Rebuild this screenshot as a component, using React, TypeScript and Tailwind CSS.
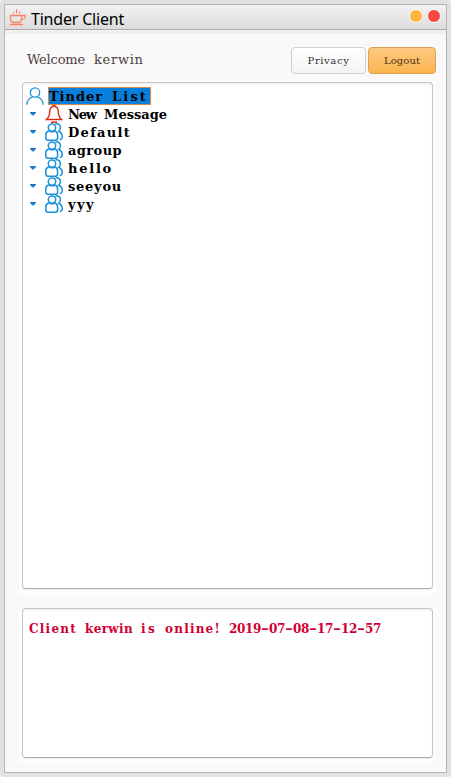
import React from "react";

function Word({ children, className }: { children: React.ReactNode; className: string }) {
  return <span className={`inline-block whitespace-pre ${className}`}>{children}</span>;
}

function Coffee() {
  return (
    <svg className="h-[17px] w-[18px] shrink-0" viewBox="0 0 18 17" fill="none" stroke="#ff8068" strokeWidth="1.3">
      <path d="M1.500 6.500h11v4q-.6 2.500-2.500 3H4.500q-2.500-.5-3-3zM12.500 6.500h3.500v2.500q-1 1.500-3.500 1.500M1 15.500h13" />
      <path d="M4.500 2.500v2M7.500 0v4.500M10.500 2.500v2" strokeWidth="1" />
    </svg>
  );
}

function Person() {
  return (
    <svg className="h-[18px] w-[18px] shrink-0" viewBox="0 0 18 18" fill="none" stroke="#1b92dc" strokeWidth="1.3">
      <circle cx="9" cy="5.500" r="4.700" />
      <path d="M.7 17.800C1 13.500 3 11.300 6.300 10M11.700 10C15 11.300 17 13.500 17.300 17.800" />
    </svg>
  );
}

function Bell() {
  return (
    <svg className="h-[18px] w-[18px] shrink-0" viewBox="0 0 18 18" fill="none" stroke="#e02814" strokeWidth="1.400">
      <path d="M8 1.500V.6h2v.9C12.200 2.200 13.300 4 13.300 6.500C13.300 10.500 14.300 12.500 16.500 14.500H1.500C3.700 12.500 4.700 10.500 4.700 6.500C4.700 4 5.800 2.200 8 1.500ZM6 17.300h6" />
    </svg>
  );
}

function Group() {
  return (
    <svg className="h-[18px] w-[18px] shrink-0" viewBox="0 0 18 18" fill="none" stroke="#1b92dc" strokeWidth="1.500">
      <circle cx="7" cy="4.600" r="3.700" />
      <path d="M4.200 8H3.500Q.8 8.900.8 12V15Q.8 17.200 3 17.200H10.500Q12.600 17.200 12.600 15V12Q12.600 8.900 10 8Q7 9.500 4.200 8Z" />
      <path d="M10.300.9C13.500.3 15.600 2.200 15.400 5Q15.200 7.200 13.800 8.200C16.500 9.500 17.300 11.500 17.300 14Q17.200 16.300 14.800 16.500" />
    </svg>
  );
}

function Row({ icon, children }: { icon: React.ReactNode; children: React.ReactNode }) {
  return (
    <div className="flex h-[18px] items-center">
      <svg className="ml-[4px] mr-[8px] h-1 w-[7px] shrink-0" viewBox="0 0 7 4">
        <path d="M0 0h6v1L3.500 3.500h-1L0 1z" fill="#2479c4" />
      </svg>
      {icon}
      <span className="ml-[5px] mt-0.5 whitespace-nowrap">{children}</span>
    </div>
  );
}

function Dash() {
  return <span className="inline-block w-2 origin-left scale-x-[1.6] tracking-normal">-</span>;
}

const groups = [
  { name: "Default", track: "tracking-[1.3px]" },
  { name: "agroup", track: "tracking-[0.4px]" },
  { name: "hello", track: "tracking-[1.75px]" },
  { name: "seeyou", track: "tracking-[0.75px]" },
  { name: "yyy", track: "tracking-[1.45px]" },
];

export default function App() {
  return (
    <div className="h-[777px] w-[451px] bg-[#f5f5f5] font-['DejaVu_Serif',serif]">
      <div className="h-full rounded-[4px] bg-[#e1e1e1] p-1">
        <div className="flex h-full flex-col border border-[#b5b5b5] bg-[#f9f9f9]">
          <header className="flex h-[25px] shrink-0 items-center border-b border-[#aaa] bg-linear-to-b from-[#f1f1f1] to-[#dcdcdc] pl-1 pr-[5px]">
            <Coffee />
            <h1 className="ml-1 mt-1 whitespace-nowrap font-['Noto_Sans',sans-serif] text-[16px] leading-6 tracking-[-0.2px] text-black">Tinder Client</h1>
            <div className="mb-[3px] ml-auto flex gap-1">
              <span className="size-[14px] rounded-full border border-white bg-[#fdb547]" />
              <span className="size-[14px] rounded-full border border-white bg-[#f84842]" />
            </div>
          </header>
          <div className="h-1 shrink-0 bg-[#f0f0f0]" />
          <div className="flex h-[47px] shrink-0 items-start pl-[22px] pr-[10px] pt-[13px]">
            <p className="mt-[3px] whitespace-nowrap text-[13px] leading-5 text-[#4d4140]">
              <Word className="w-[67px] tracking-[-0.2px]">{"Welcome "}</Word>
              <Word className="tracking-[0.7px]">kerwin</Word>
            </p>
            <button className="ml-auto h-[27px] w-[75px] rounded-[4px] border border-[#cfcfcf] bg-linear-to-b from-white to-[#f4f4f4] text-[10px] tracking-[0.6px] text-[#303030]">Privacy</button>
            <button className="ml-[2px] h-[27px] w-[68px] rounded-[4px] border border-[#dba055] bg-linear-to-b from-[#fdc97f] to-[#fbb44d] text-[10px] tracking-[0.1px] text-[#493219]">Logout</button>
          </div>
          <div className="ml-[14px] mr-[10px] h-[514px] shrink-0 bg-[#fdfdfd] px-[3px] pt-px">
            <div className="h-[507px] rounded-[4px] border border-[#c4c4c4] border-b-[#aaa] bg-white pl-[3px] pt-1 text-[13px] font-bold leading-[18px] text-black shadow-[inset_0_2px_2px_#f3f3f3,0_1px_1px_#eeeeee]">
              <div className="flex h-[18px] items-center">
                <Person />
                <span className="ml-1 flex h-[18px] w-[103px] items-center whitespace-nowrap border border-[#df8740] bg-[#087fdb] pt-0.5">
                  <Word className="w-[63px] tracking-[0.95px]">{"Tinder "}</Word>
                  <Word className="tracking-[2.15px]">List</Word>
                </span>
              </div>
              <Row icon={<Bell />}>
                <Word className="w-[36px] tracking-[-1.2px]">{"New "}</Word>
                <Word className="tracking-[0px]">Message</Word>
              </Row>
              {groups.map((g) => (
                <Row key={g.name} icon={<Group />}>
                  <Word className={g.track}>{g.name}</Word>
                </Row>
              ))}
            </div>
          </div>
          <div className="ml-[14px] mr-[10px] mt-3 h-[156px] shrink-0 bg-[#fdfdfd] px-[3px] pt-px">
            <div className="h-[150px] rounded-[4px] border border-[#c4c4c4] border-b-[#aaa] bg-white pl-[6px] pt-[10px] text-[12px] font-bold leading-5 text-[#d00032] shadow-[inset_0_2px_2px_#f3f3f3,0_1px_1px_#eeeeee]">
              <p className="whitespace-nowrap">
                <Word className="w-[56px] tracking-[1.25px]">{"Client "}</Word>
                <Word className="w-[56px] tracking-[0.35px]">{"kerwin "}</Word>
                <Word className="w-[24px] tracking-[2.35px]">{"is "}</Word>
                <Word className="w-[64px] tracking-[1.2px]">{"online! "}</Word>
                <Word className="tracking-[-0.35px]">2019<Dash />07<Dash />08<Dash />17<Dash />12<Dash />57</Word>
              </p>
            </div>
          </div>
        </div>
      </div>
    </div>
  );
}
